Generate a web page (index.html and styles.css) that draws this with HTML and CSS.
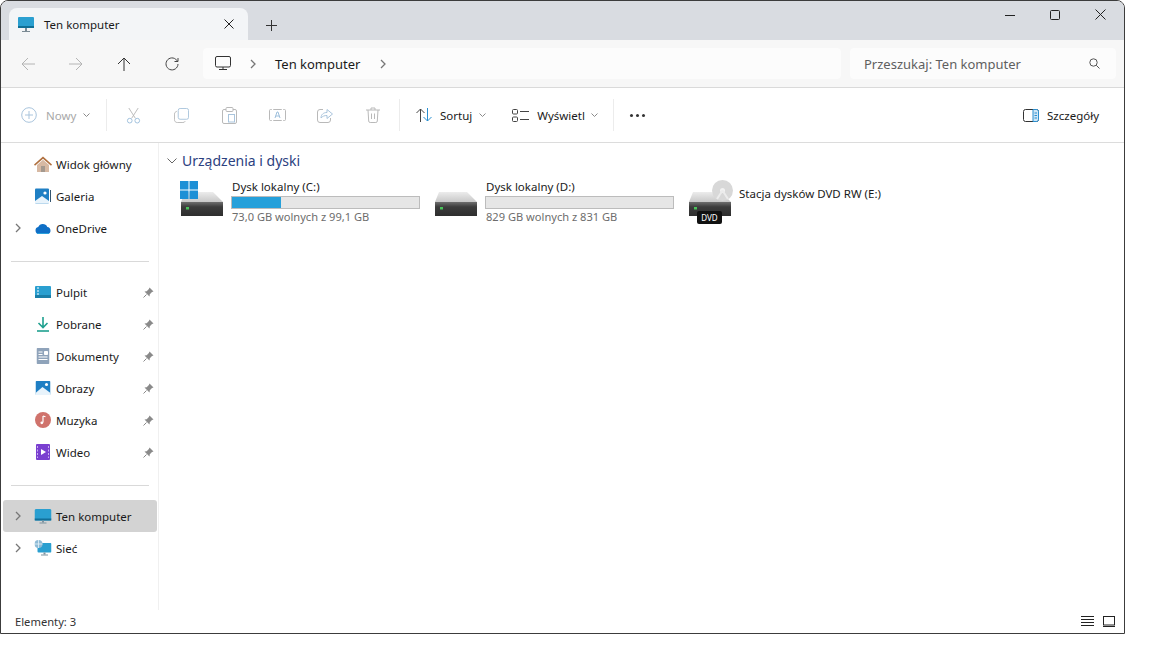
FILE: index.html
```html
<!DOCTYPE html>
<html lang="pl">
<head>
    <meta charset="UTF-8">
    <title>Ten komputer</title>
    <link rel="stylesheet" href="styles.css">
</head>
<body>
<svg class="sprite" width="0" height="0">
    <defs>
        <linearGradient id="hdd-top" x1="0" y1="0" x2="0" y2="1"><stop offset="0" stop-color="#ececec"/><stop offset="1" stop-color="#c8c8c8"/></linearGradient>
        <linearGradient id="hdd-front" x1="0" y1="0" x2="0" y2="1"><stop offset="0" stop-color="#6e6e6e"/><stop offset="0.35" stop-color="#3c3c3c"/><stop offset="1" stop-color="#2e2e2e"/></linearGradient>
    </defs>
    <symbol id="chev" viewBox="0 0 6 10"><path d="M1 1l4 4-4 4" stroke="#777" stroke-width="1.3" fill="none"/></symbol>
    <symbol id="pin" viewBox="0 0 11 11"><path d="M6.5.5l4 4-1.5.6-2.200 2.200-.3 2.200-5-5 2.200-.3L5.900 2z" fill="#8a8a8a"/><path d="M3.5 7.5l-3 3" stroke="#8a8a8a"/></symbol>
    <symbol id="hdd" viewBox="0 0 42 24"><path d="M4 0h28l10 10H0z" fill="url(#hdd-top)"/><rect y="10" width="42" height="14" fill="url(#hdd-front)"/><rect x="5" y="15" width="3" height="2.5" fill="#49c25a"/></symbol>
    <symbol id="caret" viewBox="0 0 7 4"><path d="M.5.5l3 3 3-3" stroke="#8a8a8a" fill="none"/></symbol>
</svg>
<div class="window">
    <div class="tabbar">
        <div class="tab">
            <svg class="tab-icon" width="18" height="17" viewBox="0 0 18 17"><rect x="1" y="1" width="16" height="11" rx="1" fill="#2a9fd0"/><rect x="1" y="10" width="16" height="2" fill="#0f6f96"/><rect x="8" y="12" width="2" height="3" fill="#7a8a94"/><rect x="5" y="15" width="8" height="1" fill="#7a8a94"/></svg>
            <span class="tab-title">Ten komputer</span>
            <svg class="tab-close" width="10" height="10" viewBox="0 0 10 10"><path d="M.5.5l9 9M9.5.5l-9 9" stroke="#222" fill="none"/></svg>
        </div>
        <svg class="tab-new" width="11" height="11" viewBox="0 0 11 11"><path d="M5.5 0v11M0 5.5h11" stroke="#333" fill="none"/></svg>
        <div class="win-btns">
            <svg width="10" height="10" viewBox="0 0 10 10"><path d="M0 5.5h10" stroke="#222"/></svg>
            <svg width="10" height="10" viewBox="0 0 10 10"><rect x=".5" y=".5" width="9" height="9" rx="1" stroke="#222" fill="none"/></svg>
            <svg width="11" height="11" viewBox="0 0 11 11"><path d="M.5.5l10 10M10.5.5l-10 10" stroke="#222" fill="none"/></svg>
        </div>
    </div>

    <div class="navbar">
        <div class="nav-btns">
            <svg width="14" height="14" viewBox="0 0 14 14"><path d="M14 7H1M7 1L1 7l6 6" stroke="#b4b4b4" fill="none"/></svg>
            <svg width="14" height="14" viewBox="0 0 14 14"><path d="M0 7h13M7 1l6 6-6 6" stroke="#b4b4b4" fill="none"/></svg>
            <svg width="14" height="14" viewBox="0 0 14 14"><path d="M7 14V1M1 7l6-6 6 6" stroke="#333" fill="none"/></svg>
            <svg width="14" height="14" viewBox="0 0 14 14"><path d="M12.5 4.5A6 6 0 1 0 13 7M13 1v3.5H9.5" stroke="#444" fill="none"/></svg>
        </div>
        <div class="address">
            <svg width="16" height="15" viewBox="0 0 16 15"><rect x=".5" y=".5" width="15" height="10.5" rx="1.5" stroke="#333" fill="none"/><path d="M8 11v2M4 13.5h8" stroke="#333" fill="none"/></svg>
            <svg class="crumb-sep" width="6" height="10"><use href="#chev"/></svg>
            <span class="crumb">Ten komputer</span>
            <svg class="crumb-sep" width="6" height="10"><use href="#chev"/></svg>
        </div>
        <div class="search">
            <span>Przeszukaj: Ten komputer</span>
            <svg width="11" height="11" viewBox="0 0 11 11"><circle cx="4.5" cy="4.5" r="3.7" stroke="#555" fill="none"/><path d="M7.3 7.3l3.200 3.200" stroke="#555"/></svg>
        </div>
    </div>

    <div class="cmdbar">
        <div class="cmd cmd-new is-off">
            <svg width="16" height="16" viewBox="0 0 16 16"><circle cx="8" cy="8" r="7.3" stroke="#a9c4dc" fill="none"/><path d="M8 4v8M4 8h8" stroke="#a9c4dc"/></svg>
            <span>Nowy</span>
            <svg class="caret" width="7" height="4"><use href="#caret"/></svg>
        </div>
        <i class="cmd-sep"></i>
        <div class="cmd-icons">
            <svg width="15" height="17" viewBox="0 0 16 18"><path d="M3 1l7 11M13 1L6 12" stroke="#b9b9b9" fill="none"/><circle cx="4" cy="14.5" r="2.5" stroke="#9dbfdc" fill="none"/><circle cx="12" cy="14.5" r="2.5" stroke="#9dbfdc" fill="none"/></svg>
            <svg width="15" height="15" viewBox="0 0 16 16"><rect x="4.5" y=".5" width="11" height="11.5" rx="2" stroke="#a9c4dc" fill="none"/><path d="M3 3.5C1.5 4 .5 5 .5 6.5v6c0 1.6 1.200 3 3 3h6c1.300 0 2-.6 2.500-1.500" stroke="#b9b9b9" fill="none"/></svg>
            <svg width="15" height="17" viewBox="0 0 15 17"><rect x=".5" y="2.5" width="14" height="14" rx="1.5" stroke="#b9b9b9" fill="none"/><rect x="4" y=".5" width="7" height="4" rx="1" fill="#fff" stroke="#b9b9b9"/><rect x="6.5" y="7.5" width="6" height="7.5" stroke="#a9c4dc" fill="none"/></svg>
            <svg width="17" height="16" viewBox="0 0 17 16"><rect x=".5" y="2.5" width="16" height="11" rx="1" stroke="#b9b9b9" fill="none"/><path d="M3.5 0v16M13.5 0v16" stroke="#fff" stroke-width="1.5"/><path d="M6 11l2-6h1l2 6M6.8 9h3.4" stroke="#9dbfdc" fill="none"/></svg>
            <svg width="16" height="16" viewBox="0 0 16 16"><path d="M6 2.5H3A2.5 2.5 0 0 0 .5 5v8A2.5 2.5 0 0 0 3 15.5h8a2.5 2.5 0 0 0 2.5-2.5v-2" stroke="#b9b9b9" fill="none"/><path d="M4 11c0-3.5 2.5-5.5 6-5.500v-3L15.5 7 10 11.500v-3c-2.500 0-4.500.7-6 2.500z" stroke="#a9c4dc" fill="none"/></svg>
            <svg width="14" height="16" viewBox="0 0 14 16"><path d="M0 3h14M5 3V1h4v2M2 3l.7 11a1.5 1.5 0 0 0 1.5 1.5h5.600a1.500 1.500 0 0 0 1.500-1.500L12 3M5.5 6.5V12M8.5 6.5V12" stroke="#b9b9b9" fill="none"/></svg>
        </div>
        <i class="cmd-sep"></i>
        <div class="cmd cmd-sort">
            <svg width="16" height="14" viewBox="0 0 16 14"><path d="M4.5 14V1M.5 5l4-4 4 4" stroke="#444" fill="none"/><path d="M11.5 0v13M7.5 9l4 4 4-4" stroke="#2a8fd0" fill="none"/></svg>
            <span>Sortuj</span>
            <svg class="caret" width="7" height="4"><use href="#caret"/></svg>
        </div>
        <div class="cmd cmd-view">
            <svg width="17" height="13" viewBox="0 0 17 13"><rect x=".5" y=".5" width="5" height="4.5" rx="1" stroke="#444" fill="none"/><rect x=".5" y="8" width="5" height="4.5" rx="1" stroke="#444" fill="none"/><path d="M8 2.5h9M8 10.5h9" stroke="#444"/></svg>
            <span>Wyświetl</span>
            <svg class="caret" width="7" height="4"><use href="#caret"/></svg>
        </div>
        <i class="cmd-sep"></i>
        <div class="cmd-more"><i></i><i></i><i></i></div>
        <div class="cmd cmd-details">
            <svg width="16" height="13" viewBox="0 0 16 13"><rect x=".5" y=".5" width="15" height="12" rx="2" stroke="#333" fill="none"/><path d="M10 .5h3.5a2 2 0 0 1 2 2v8a2 2 0 0 1-2 2H10z" fill="#cfe6f6" stroke="#2a8fd0"/><path d="M11.5 4H14M11.5 6.5H14M11.5 9H14" stroke="#2a8fd0"/></svg>
            <span>Szczegóły</span>
        </div>
    </div>

    <div class="main">
        <nav class="sidebar">
            <div class="side-row">
                <span class="chev"></span>
                <svg class="side-icon" width="18" height="16" viewBox="0 0 18 16"><path d="M3 9l6-5.2L15 9v7H3z" fill="#d7b9a3"/><path d="M9 .5L0 8.5l1 1.2 8-6.900 8 6.900 1-1.200z" fill="#b0703f"/><rect x="7" y="10" width="4" height="6" fill="#a4998f"/></svg>
                <span class="side-label">Widok główny</span>
            </div>
            <div class="side-row">
                <span class="chev"></span>
                <svg class="side-icon" width="16" height="16" viewBox="0 0 16 16"><rect width="14" height="15" y=".5" rx="1" fill="#1f7fc4"/><path d="M0 13l7-5 7 5v2.5H0z" fill="#e8f3fb"/><circle cx="10" cy="5" r="1.6" fill="#fff"/><rect x="15" y="2" width="1" height="12" fill="#34556f"/></svg>
                <span class="side-label">Galeria</span>
            </div>
            <div class="side-row">
                <svg class="chev"><use href="#chev"/></svg>
                <svg class="side-icon" width="16" height="11" viewBox="0 0 16 11"><path d="M4 11a3.5 3.5 0 0 1-.8-6.900A5 5 0 0 1 12.3 4 3.6 3.6 0 0 1 13 11z" fill="#0f6fc6"/><path d="M2 10.5h12" stroke="#2aa0dc"/></svg>
                <span class="side-label">OneDrive</span>
            </div>
            <hr class="side-sep">
            <div class="side-row">
                <span class="chev"></span>
                <svg class="side-icon" width="16" height="12" viewBox="0 0 16 12"><rect width="16" height="12" rx="1" fill="#2a9fd0"/><rect y="9" width="16" height="3" fill="#1a7ea8"/><path d="M2 2h2M2 5h2M2 8h2" stroke="#fff"/></svg>
                <span class="side-label">Pulpit</span>
                <svg class="pin" width="11" height="11"><use href="#pin"/></svg>
            </div>
            <div class="side-row">
                <span class="chev"></span>
                <svg class="side-icon" width="14" height="15" viewBox="0 0 14 15"><path d="M7 0v10M2.5 6L7 10.5 11.5 6" stroke="#1fa08f" stroke-width="1.6" fill="none"/><path d="M1 14h12" stroke="#1fa08f" stroke-width="1.6"/></svg>
                <span class="side-label">Pobrane</span>
                <svg class="pin" width="11" height="11"><use href="#pin"/></svg>
            </div>
            <div class="side-row">
                <span class="chev"></span>
                <svg class="side-icon" width="13" height="16" viewBox="0 0 13 16"><rect width="13" height="16" rx="1" fill="#8fa3ba"/><path d="M2 4h4M2 6.5h4M2 9h9M2 11.5h9M8 3.5h3v3H8z" stroke="#fff" fill="#fff"/></svg>
                <span class="side-label">Dokumenty</span>
                <svg class="pin" width="11" height="11"><use href="#pin"/></svg>
            </div>
            <div class="side-row">
                <span class="chev"></span>
                <svg class="side-icon" width="15" height="14" viewBox="0 0 15 14"><rect width="15" height="14" rx="1" fill="#1f7fc4"/><path d="M0 12l7-6 8 6v2H0z" fill="#e8f3fb"/><circle cx="11" cy="3.5" r="1.5" fill="#fff"/></svg>
                <span class="side-label">Obrazy</span>
                <svg class="pin" width="11" height="11"><use href="#pin"/></svg>
            </div>
            <div class="side-row">
                <span class="chev"></span>
                <svg class="side-icon" width="16" height="16" viewBox="0 0 16 16"><circle cx="8" cy="8" r="8" fill="#d0736c"/><path d="M8 4v6.5M8 4l2.5.8" stroke="#fff" stroke-width="1.2" fill="none"/><circle cx="6.8" cy="10.8" r="1.4" fill="#fff"/></svg>
                <span class="side-label">Muzyka</span>
                <svg class="pin" width="11" height="11"><use href="#pin"/></svg>
            </div>
            <div class="side-row">
                <span class="chev"></span>
                <svg class="side-icon" width="14" height="16" viewBox="0 0 14 16"><rect width="14" height="16" rx="1" fill="#7a3fd0"/><path d="M5 5l5 3-5 3z" fill="#fff"/><path d="M1.5 2v12M12.5 2v12" stroke="#c9aef0" stroke-dasharray="2 1.5"/></svg>
                <span class="side-label">Wideo</span>
                <svg class="pin" width="11" height="11"><use href="#pin"/></svg>
            </div>
            <hr class="side-sep">
            <div class="side-row is-active">
                <svg class="chev"><use href="#chev"/></svg>
                <svg class="side-icon" width="17" height="15" viewBox="0 0 17 15"><rect width="17" height="11.5" rx="1.5" fill="#2a9fd0"/><rect y="9.5" width="17" height="2" fill="#126f98"/><rect x="7.5" y="11.5" width="2" height="2" fill="#7f93a0"/><rect x="5" y="13.5" width="7" height="1" fill="#7f93a0"/></svg>
                <span class="side-label">Ten komputer</span>
            </div>
            <div class="side-row">
                <svg class="chev"><use href="#chev"/></svg>
                <svg class="side-icon" width="17" height="16" viewBox="0 0 17 16"><rect x="3" y="3" width="14" height="9.5" rx="1" fill="#2a9fd0"/><rect x="9" y="12.5" width="2" height="2" fill="#7f93a0"/><rect x="6.5" y="14.5" width="7" height="1" fill="#7f93a0"/><circle cx="4" cy="4" r="4" fill="#8fbbd6"/><path d="M0 4h8M4 0v8" stroke="#e6f2f9" stroke-width=".8"/></svg>
                <span class="side-label">Sieć</span>
            </div>
        </nav>

        <section class="content">
            <div class="group-head">
                <svg width="10" height="6" viewBox="0 0 10 6"><path d="M.5.5L5 5 9.5.5" stroke="#666" fill="none"/></svg>
                <span>Urządzenia i dyski</span>
            </div>
            <div class="drives">
                <div class="drive">
                    <div class="drive-icon">
                        <svg class="hdd" width="42" height="24"><use href="#hdd"/></svg>
                        <svg class="win-logo" width="18" height="18" viewBox="0 0 18 18"><path d="M0 0h8.5v8.5H0zM9.5 0H18v8.5H9.5zM0 9.5h8.5V18H0zM9.5 9.5H18V18H9.5z" fill="#1d90d6"/></svg>
                    </div>
                    <div class="drive-text">
                        <div class="drive-name">Dysk lokalny (C:)</div>
                        <div class="meter"><div class="meter-fill" style="width: 26.4%"></div></div>
                        <div class="drive-free">73,0 GB wolnych z 99,1 GB</div>
                    </div>
                </div>
                <div class="drive">
                    <div class="drive-icon">
                        <svg class="hdd" width="42" height="24"><use href="#hdd"/></svg>
                    </div>
                    <div class="drive-text">
                        <div class="drive-name">Dysk lokalny (D:)</div>
                        <div class="meter"><div class="meter-fill" style="width: 0%"></div></div>
                        <div class="drive-free">829 GB wolnych z 831 GB</div>
                    </div>
                </div>
                <div class="drive drive-dvd">
                    <div class="drive-icon">
                        <svg class="hdd" width="42" height="24"><use href="#hdd"/></svg>
                        <svg class="disc" width="21" height="21" viewBox="0 0 21 21"><circle cx="10.5" cy="10.5" r="10.5" fill="#d8d8d8"/><circle cx="10.5" cy="10.5" r="2.5" fill="#f2f2f2"/><path d="M10.5 10.5L5 19M10.5 10.500L16 19" stroke="#ececec" stroke-width="2"/></svg>
                        <span class="dvd-badge">DVD</span>
                    </div>
                    <div class="drive-name">Stacja dysków DVD RW (E:)</div>
                </div>
            </div>
        </section>
    </div>

    <div class="statusbar">
        <span>Elementy: 3</span>
        <div class="status-views">
            <svg width="13" height="11" viewBox="0 0 13 11"><path d="M0 .5h13M0 3.5h13M0 6.5h13M0 9.5h13" stroke="#222"/></svg>
            <svg width="12" height="11" viewBox="0 0 12 11"><rect x=".5" y=".5" width="11" height="8.5" stroke="#222" fill="none"/><path d="M0 10.5h12" stroke="#222"/></svg>
        </div>
    </div>
</div>
</body>
</html>
```

FILE: styles.css
```css
html, body {
    margin: 0;
    padding: 0;
    background-color: #fff;
}
body {
    font-family: 'Noto Sans', sans-serif;
    font-size: 11.5px;
    color: #1a1a1a;
    overflow: hidden;
}
svg {
    display: block;
    flex: none;
}
.sprite {
    position: absolute;
}
.window {
    width: 1125px;
    height: 634px;
    box-sizing: border-box;
    display: flex;
    flex-direction: column;
    border: 1px solid #3c3c3c;
    border-radius: 8px 8px 0 0;
    overflow: hidden;
    background-color: #fff;
}

/* tab strip */
.tabbar {
    height: 39px;
    flex: none;
    display: flex;
    align-items: flex-end;
    padding-left: 8px;
    background-color: #d9dce1;
}
.tab {
    width: 239px;
    height: 32px;
    box-sizing: border-box;
    display: flex;
    align-items: center;
    padding: 0 14px 0 8px;
    background-color: #f3f5f7;
    border-radius: 8px 8px 0 0;
}
.tab-icon {
    margin-right: 9px;
}
.tab-title {
    flex: 1;
}
.tab-new {
    margin: 0 0 9px 18px;
}
.win-btns {
    margin-left: auto;
    align-self: flex-start;
    display: flex;
    align-items: center;
    gap: 35px;
    padding: 8px 18px 0 0;
}

/* back / forward, address, search */
.navbar {
    height: 48px;
    flex: none;
    box-sizing: border-box;
    display: flex;
    align-items: center;
    background-color: #f7f7f7;
    border-bottom: 1px solid #dadada;
}
.nav-btns {
    width: 202px;
    display: flex;
    align-items: center;
    gap: 34px;
    padding-left: 20px;
    box-sizing: border-box;
}
.address {
    width: 638px;
    height: 31px;
    box-sizing: border-box;
    display: flex;
    align-items: center;
    padding-left: 12px;
    background-color: #fcfcfc;
    border-radius: 4px;
    font-size: 13px;
}
.crumb-sep {
    margin-left: 19px;
}
.crumb {
    margin-left: 19px;
}
.crumb + .crumb-sep {
    margin-left: 20px;
}
.search {
    width: 266px;
    height: 31px;
    margin-left: 9px;
    box-sizing: border-box;
    display: flex;
    align-items: center;
    justify-content: space-between;
    padding: 0 16px 0 14px;
    background-color: #fcfcfc;
    border-radius: 4px;
    font-size: 13px;
    color: #5f5f5f;
}

/* command bar */
.cmdbar {
    height: 55px;
    flex: none;
    box-sizing: border-box;
    display: flex;
    align-items: center;
    border-bottom: 1px solid #dcdcdc;
}
.cmd {
    display: flex;
    align-items: center;
}
.cmd-sep {
    width: 1px;
    height: 32px;
    flex: none;
    background-color: #ececec;
}
.is-off {
    color: #a8a8a8;
}
.cmd-new {
    width: 105px;
    padding-left: 20px;
    box-sizing: border-box;
}
.cmd-new span {
    margin: 0 7px 0 9px;
}
.cmd-icons {
    width: 292px;
    box-sizing: border-box;
    padding-left: 2px;
    display: grid;
    grid-template-columns: repeat(6, 48px);
    justify-items: center;
    align-items: center;
}
.cmd-sort {
    margin-left: 16px;
}
.cmd-sort span {
    margin: 0 7px 0 8px;
}
.cmd-view {
    width: 101px;
    margin-left: 26px;
}
.cmd-view span {
    margin: 0 6px 0 8px;
}
.cmd-more {
    display: flex;
    gap: 3px;
    margin-left: 16px;
}
.cmd-more i {
    width: 3px;
    height: 3px;
    border-radius: 50%;
    background-color: #333;
}
.cmd-details {
    margin-left: auto;
    padding-right: 25px;
}
.cmd-details span {
    margin-left: 8px;
}

/* main area */
.main {
    flex: 1;
    min-height: 0;
    display: flex;
}
.sidebar {
    width: 158px;
    flex: none;
    box-sizing: border-box;
    padding: 5px 0 0 2px;
    border-right: 1px solid #f0f0f0;
}
.side-row {
    width: 154px;
    height: 32px;
    display: flex;
    align-items: center;
    position: relative;
    border-radius: 3px;
}
.side-row.is-active {
    background-color: #d3d3d3;
}
.chev {
    width: 6px;
    height: 10px;
    margin-left: 12px;
}
.side-icon {
    position: absolute;
    left: 40px;
    transform: translateX(-50%);
}
.side-label {
    margin-left: 35px;
}
.pin {
    position: absolute;
    left: 140px;
}
.side-sep {
    width: 138px;
    height: 1px;
    margin: 17px 0 14px 8px;
    border: 0;
    background-color: #d9d9d9;
}

.content {
    flex: 1;
    padding: 8px 0 0 8px;
}
.group-head {
    display: flex;
    align-items: center;
    gap: 5px;
    font-size: 14px;
    color: #2c4180;
}
.drives {
    display: flex;
    margin: 9px 0 0 13px;
}
.drive {
    width: 254px;
    flex: none;
    display: flex;
    align-items: flex-start;
}
.drive-icon {
    width: 44px;
    height: 48px;
    margin-right: 6px;
    position: relative;
    flex: none;
}
.hdd {
    position: absolute;
    left: 1px;
    top: 13px;
}
.win-logo {
    position: absolute;
    left: 0;
    top: 2px;
}
.disc {
    position: absolute;
    left: 24px;
    top: 1px;
}
.dvd-badge {
    position: absolute;
    left: 9px;
    top: 32px;
    width: 25px;
    height: 13px;
    background-color: #111;
    border-radius: 2px;
    color: #fff;
    font-size: 8px;
    line-height: 13px;
    text-align: center;
}
.drive-text {
    width: 189px;
    margin-left: 1px;
}
.drive-name {
    line-height: 16px;
    padding-left: 1px;
}
.drive-dvd .drive-name {
    padding-top: 7px;
}
.meter {
    height: 11px;
    margin-top: 1px;
    border: 1px solid #bcbcbc;
    background-color: #e6e6e6;
}
.meter-fill {
    height: 100%;
    background-color: #26a0da;
}
.drive-free {
    margin-left: 1px;
    font-size: 11.1px;
    color: #6d6d6d;
}

/* status bar */
.statusbar {
    height: 23px;
    flex: none;
    display: flex;
    align-items: center;
    justify-content: space-between;
    padding: 0 9px 0 14px;
    font-size: 11.2px;
    color: #333;
}
.status-views {
    display: flex;
    gap: 9px;
}
```
